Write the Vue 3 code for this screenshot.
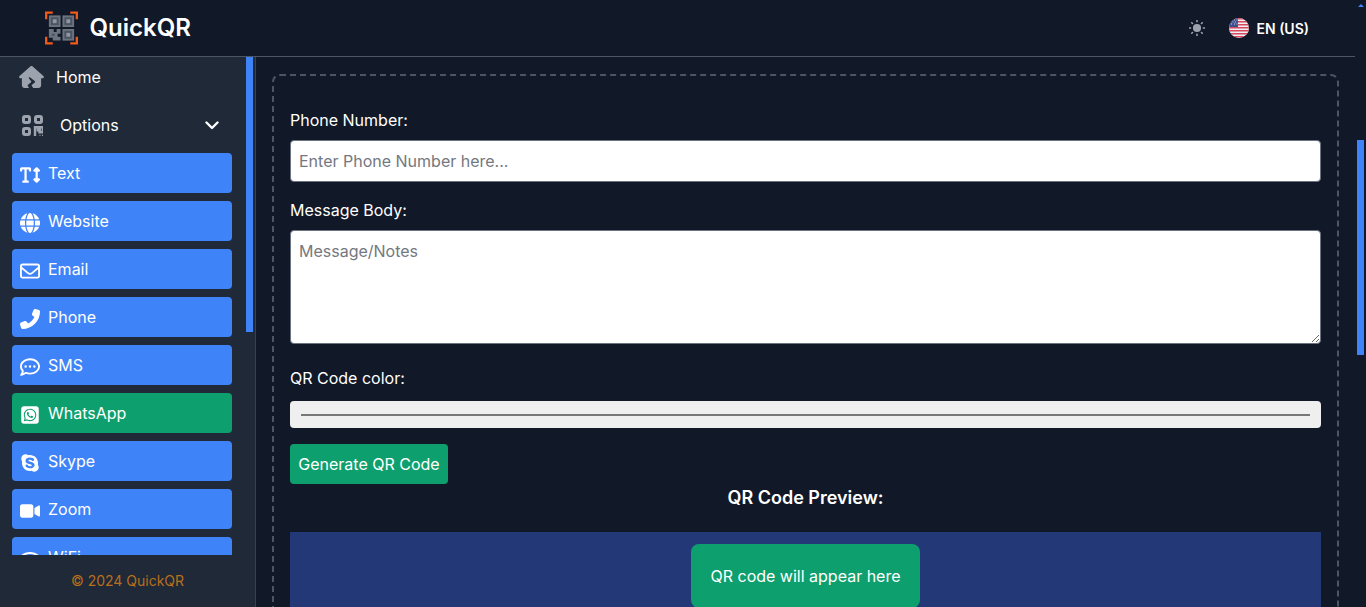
<script setup>
import { ref } from 'vue'

const phone = ref('')
const message = ref('')

// font awesome style glyphs, drawn inline because there is no icon package
const menu = [
  { name: 'Text', box: '0 0 576 512', d: 'M64 128V96h64l0 320H96c-17.7 0-32 14.3-32 32s14.3 32 32 32H224c17.7 0 32-14.3 32-32s-14.3-32-32-32H192l0-320h64v32c0 17.7 14.3 32 32 32s32-14.3 32-32V80c0-26.5-21.5-48-48-48H160 48C21.5 32 0 53.5 0 80v48c0 17.7 14.3 32 32 32s32-14.3 32-32zM502.6 41.4c-12.5-12.5-32.8-12.5-45.3 0l-64 64c-9.2 9.2-11.9 22.9-6.9 34.9s16.6 19.8 29.6 19.8h32V352H416c-12.9 0-24.6 7.8-29.6 19.8s-2.2 25.7 6.9 34.9l64 64c12.5 12.5 32.8 12.5 45.3 0l64-64c9.2-9.2 11.9-22.9 6.9-34.9s-16.6-19.8-29.6-19.8H512V160h32c12.9 0 24.6-7.8 29.6-19.8s2.2-25.7-6.9-34.9l-64-64z' },
  { name: 'Website', box: '0 0 512 512', d: 'M352 256c0 22.2-1.2 43.6-3.3 64H163.3c-2.2-20.4-3.3-41.8-3.3-64s1.2-43.6 3.3-64H348.7c2.2 20.4 3.3 41.8 3.3 64zm28.8-64H503.9c5.3 20.5 8.1 41.9 8.1 64s-2.8 43.5-8.1 64H380.8c2.1-20.6 3.2-42 3.2-64s-1.1-43.4-3.2-64zm112.6-32H376.7c-10-63.9-29.8-117.4-55.3-151.6c78.3 20.7 142 77.5 171.9 151.6zm-149.1 0H167.7c6.1-36.4 15.5-68.6 27-94.7c10.5-23.6 22.2-40.7 33.5-51.5C239.4 3.2 248.7 0 256 0s16.6 3.2 27.8 13.8c11.3 10.8 23 27.9 33.5 51.5c11.6 26 20.9 58.2 27 94.7zm-209 0H18.6C48.6 85.9 112.2 29.1 190.6 8.4C165.1 42.6 145.3 96.1 135.3 160zM8.1 192H131.2c-2.1 20.6-3.2 42-3.2 64s1.1 43.4 3.2 64H8.1C2.8 299.5 0 278.1 0 256s2.8-43.5 8.1-64zM194.7 446.6c-11.6-26-20.9-58.2-27-94.6H344.3c-6.1 36.4-15.5 68.6-27 94.6c-10.5 23.6-22.2 40.7-33.5 51.5C272.6 508.8 263.3 512 256 512s-16.6-3.2-27.8-13.8c-11.3-10.8-23-27.9-33.5-51.5zM135.3 352c10 63.9 29.8 117.4 55.3 151.6C112.2 482.9 48.6 426.1 18.6 352H135.3zm358.1 0c-30 74.1-93.6 130.9-171.9 151.6c25.5-34.2 45.2-87.7 55.3-151.6H493.4z' },
  { name: 'Email', box: '0 0 512 512', d: 'M64 112c-8.8 0-16 7.2-16 16v22.1L220.5 291.7c20.7 17 50.4 17 71.1 0L464 150.1V128c0-8.8-7.2-16-16-16H64zM48 212.2V384c0 8.8 7.2 16 16 16H448c8.8 0 16-7.2 16-16V212.2L322 328.8c-38.4 31.5-93.7 31.5-132 0L48 212.2zM0 128C0 92.7 28.7 64 64 64H448c35.3 0 64 28.7 64 64V384c0 35.3-28.7 64-64 64H64c-35.3 0-64-28.7-64-64V128z' },
  { name: 'Phone', box: '0 0 512 512', flip: true, d: 'M164.9 24.6c-7.7-18.6-28-28.5-47.4-23.2l-88 24C12.1 30.2 0 46 0 64C0 311.4 200.6 512 448 512c18 0 33.8-12.1 38.6-29.5l24-88c5.3-19.4-4.6-39.7-23.2-47.4l-96-40c-16.3-6.8-35.2-2.1-46.3 11.6L304.7 368C234.3 334.7 177.3 277.7 144 207.3L193.3 167c13.7-11.2 18.4-30 11.6-46.3l-40-96z' },
  { name: 'SMS', box: '0 0 512 512', d: 'M168.2 384.9c-15-5.4-31.7-3.1-44.6 6.4c-8.2 6-22.3 14.8-39.4 22.7c5.6-14.7 9.9-31.3 11.3-49.4c1-12.9-3.3-25.7-11.8-35.5C60.4 302.8 48 272 48 240c0-79.5 83.3-160 208-160s208 80.5 208 160s-83.3 160-208 160c-31.6 0-61.3-5.5-87.8-15.1zM26.3 423.8c-1.6 2.7-3.3 5.4-5.1 8.1l-.3 .5c-1.6 2.3-3.2 4.6-4.8 6.9c-3.5 4.7-7.3 9.3-11.3 13.6c-4.6 4.6-5.9 11.4-3.4 17.4c2.5 6 8.3 9.9 14.8 9.9c5.1 0 10.2-.3 15.3-.8l.7-.1c4.4-.5 8.8-1.1 13.2-1.9c.8-.1 1.6-.3 2.4-.5c17.8-3.5 34.9-9.5 50.1-16.1c22.9-10 42.4-21.9 54.3-30.6c31.8 11.5 67 17.9 104.1 17.9c141.4 0 256-93.1 256-208S397.4 32 256 32S0 125.1 0 240c0 45.1 17.7 86.8 47.7 120.9c-1.9 24.5-11.4 46.3-21.4 62.9zM144 272a32 32 0 1 0 0-64 32 32 0 1 0 0 64zm144-32a32 32 0 1 0 -64 0 32 32 0 1 0 64 0zm80 32a32 32 0 1 0 0-64 32 32 0 1 0 0 64z' },
  { name: 'WhatsApp', box: '0 0 448 512', green: true, d: 'M92.1 254.6c0 24.9 7 49.2 20.2 70.1l3.1 5-13.3 48.6L152 365.2l4.8 2.9c20.2 12 43.4 18.4 67.1 18.4h.1c72.6 0 133.3-59.1 133.3-131.8c0-35.2-15.2-68.3-40.1-93.2c-25-25-58-38.7-93.2-38.7c-72.7 0-131.8 59.1-131.9 131.8zM274.8 330c-12.6 1.9-22.4 .9-47.5-9.9c-36.8-15.9-61.8-51.5-66.9-58.7c-.4-.6-.7-.9-.8-1.1c-2-2.6-16.2-21.5-16.2-41c0-18.4 9-27.9 13.2-32.3c.3-.3 .5-.5 .7-.8c3.6-4 8-5 10.6-5c2.6 0 5.3 0 7.6 .1c.3 0 .5 0 .8 0c2.3 0 5.2 0 8.1 6.8c1.2 2.9 3 7.3 4.9 11.8c3.3 8 6.7 16.3 7.3 17.6c1 2 1.7 4.3 .3 6.9c-3.4 6.8-6.9 10.4-9.3 13c-3.1 3.2-4.5 4.7-2.3 8.6c15.3 26.3 30.6 35.4 53.9 47.1c4 2 6.3 1.7 8.6-1c2.3-2.6 9.9-11.6 12.5-15.5c2.6-4 5.3-3.3 8.9-2s23.1 10.9 27.1 12.9c.8 .4 1.5 .7 2.1 1c2.8 1.4 4.7 2.3 5.5 3.6c.9 1.9 .9 9.9-2.4 19.1c-3.3 9.3-19.1 17.7-26.7 18.8zM448 96c0-35.3-28.7-64-64-64H64C28.7 32 0 60.7 0 96V416c0 35.3 28.7 64 64 64H384c35.3 0 64-28.7 64-64V96zM148.1 393.9L64 416l22.5-82.2c-13.9-24-21.2-51.3-21.2-79.3C65.4 167.1 136.5 96 223.9 96c42.4 0 82.2 16.5 112.2 46.5c29.9 30 47.9 69.8 47.9 112.2c0 87.4-72.7 158.5-160.1 158.5c-26.6 0-52.7-6.7-75.8-19.3z' },
  { name: 'Skype', box: '0 0 448 512', d: 'M424.7 299.8c2.9-14 4.7-28.9 4.7-43.8 0-113.5-91.9-205.3-205.3-205.3-14.9 0-29.7 1.7-43.8 4.7C161.3 40.7 137.7 32 112 32 50.2 32 0 82.2 0 144c0 25.7 8.7 49.3 23.3 68.2-2.9 14-4.7 28.9-4.7 43.8 0 113.5 91.9 205.3 205.3 205.3 14.9 0 29.7-1.7 43.8-4.7 19 14.6 42.6 23.3 68.2 23.3 61.8 0 112-50.2 112-112 .1-25.6-8.6-49.2-23.2-68.1zm-194.6 91.5c-65.6 0-120.5-29.2-120.5-65 0-16 9-30.6 29.5-30.6 31.2 0 34.1 44.9 88.1 44.9 25.7 0 42.3-11.4 42.3-26.3 0-18.7-16-21.6-42-28-62.5-15.4-117.8-22-117.8-87.2 0-59.2 58.6-81.1 109.1-81.1 55.1 0 110.8 21.9 110.8 55.4 0 16.9-11.4 31.8-30.3 31.8-28.3 0-29.2-33.5-75-33.5-25.7 0-42 7-42 22.5 0 19.8 20.8 21.8 69.1 33 41.4 9.3 90.7 26.8 90.7 77.6 0 59.1-57.1 86.5-112 86.5z' },
  { name: 'Zoom', box: '0 0 576 512', d: 'M0 128C0 92.7 28.7 64 64 64H320c35.3 0 64 28.7 64 64V384c0 35.3-28.7 64-64 64H64c-35.3 0-64-28.7-64-64V128zM559.1 99.8c10.4 5.6 16.9 16.4 16.9 28.2V384c0 11.8-6.5 22.6-16.9 28.2s-23 5-32.9-1.6l-96-64L416 337.1V320 192 174.9l14.2-9.5 96-64c9.8-6.5 22.4-7.2 32.9-1.6z' },
  { name: 'WiFi', box: '0 0 640 512', d: 'M54.2 202.9C123.2 136.6 216.8 96 320 96s196.8 40.6 265.8 106.9c12.8 12.2 33 11.8 45.2-.9s11.8-33-.9-45.2C549.7 79.5 440.4 32 320 32S90.3 79.5 9.8 156.7C-2.9 169-3.3 189.2 8.9 202s32.5 13.2 45.2 .9zM320 256c56.8 0 108.6 21.1 148.2 56c13.3 11.7 33.5 10.4 45.2-2.8s10.4-33.5-2.8-45.2C459.8 219.2 393 192 320 192s-139.8 27.2-190.5 72c-13.3 11.7-14.5 31.9-2.8 45.2s31.9 14.5 45.2 2.8c39.5-34.9 91.3-56 148.2-56zm64 160a64 64 0 1 0 -128 0 64 64 0 1 0 128 0z' }
]

const stripes = [0, 1, 2, 3, 4, 5, 6]
</script>

<template>
  <div class="page">
    <div class="shell">
      <header class="topbar">
        <div class="brand">
          <svg class="logo" viewBox="0 0 34 34">
            <g fill="none" stroke="#ee5a1a" stroke-width="2.400">
              <path d="M1.200 8V1.200H8M26 1.200h6.800V8M32.800 26v6.800H26M8 32.800H1.200V26" />
            </g>
            <g fill="#6b7280">
              <rect x="4" y="4" width="12" height="12" />
              <rect x="18" y="4" width="12" height="12" />
              <rect x="18" y="18" width="12" height="12" />
              <path d="M4 18h5v3h3v-3h4v5h-3v3h3v4H8v-3H4z" />
            </g>
            <g fill="#111827" opacity=".35">
              <rect x="6" y="6" width="8" height="8" />
              <rect x="20" y="6" width="8" height="8" />
              <rect x="20" y="20" width="8" height="8" />
              <rect x="7" y="23" width="3" height="2" />
            </g>
            <g fill="#9096a0">
              <rect x="8" y="8" width="4" height="4" />
              <rect x="22" y="8" width="4" height="4" />
              <rect x="22" y="22" width="4" height="4" />
            </g>
          </svg>
          <span class="brand-name">QuickQR</span>
        </div>
        <div class="top-actions">
          <svg class="sun" viewBox="1 1 18 18" fill="#9ca3af">
            <circle cx="10" cy="10" r="4.600" />
            <g stroke="#9ca3af" stroke-width="1.800" stroke-linecap="round">
              <path d="M10 1.600v1.200M10 17.200v1.200M1.600 10h1.200M17.200 10h1.200M4.100 4.100l.8.8M15.100 15.100l.8.8M4.100 15.900l.8-.8M15.100 4.900l.8-.8" />
            </g>
          </svg>
          <div class="lang">
            <svg class="flag" viewBox="0 0 20 20">
              <defs>
                <clipPath id="flag-clip"><circle cx="10" cy="10" r="10" /></clipPath>
              </defs>
              <g clip-path="url(#flag-clip)">
                <rect width="20" height="20" fill="#eef0f3" />
                <rect v-for="s in stripes" :key="s" x="0" :y="s * 3" width="20" height="1.500" fill="#d8475b" />
                <rect width="9" height="9" fill="#3c4f8f" />
                <path d="M2 2h1M5 2h1M7.500 2h1M3.500 4h1M6 4h1M2 6h1M5 6h1M7.500 6h1" stroke="#eef0f3" stroke-width=".8" />
              </g>
            </svg>
            <span class="lang-text">EN (US)</span>
          </div>
        </div>
      </header>

      <div class="body">
        <aside class="sidebar">
          <div class="side-scroll">
            <nav class="nav">
              <a class="home">
                <svg class="home-icon" viewBox="0 0 576 512" fill="#9ca3af"><path d="M543.800 287.600c17 0 32-14 32-32.100c1-9-3-17-11-24L309.500 7c-6-5-14-7-21-7s-15 1-22 8L10 231.500c-7 7-10 15-10 24c0 18 14 32.100 32 32.100h32V448c0 35.300 28.700 64 64 64H230.400l-31.300-52.200c-4.100-6.800-2.600-15.500 3.500-20.500L288 368l-60.200-82.800c-10.900-15 8.200-33.500 22.800-22l117.900 92.600c8 6.300 8.200 18.400 .4 24.900L288 448l38.400 64H448.500c35.500 0 64.200-28.800 64-64.300l-.7-160.200h32z" /></svg>
                <span>Home</span>
              </a>
              <button class="options">
                <svg class="options-icon" viewBox="0 0 21 21" fill="none" stroke="#9ca3af" stroke-width="3">
                  <rect x="1.500" y="1.500" width="6" height="6" rx="1.500" />
                  <rect x="13.500" y="1.500" width="6" height="6" rx="1.500" />
                  <rect x="1.500" y="13.500" width="6" height="6" rx="1.500" />
                  <path d="M13 21v-8.800h2.800v3h2v-3h3v5h-4.500" stroke-width="2.400" />
                  <path d="M17.500 20.500h1M20 20.500h1" stroke-width="1.500" />
                </svg>
                <span class="options-label">Options</span>
                <svg class="chevron" viewBox="0 0 14 9" fill="none" stroke="#fff" stroke-width="2.400" stroke-linecap="round" stroke-linejoin="round"><path d="M1.500 1.500 7 7l5.500-5.500" /></svg>
              </button>
              <ul class="menu">
                <li v-for="item in menu" :key="item.name" class="menu-item" :class="{ green: item.green }">
                  <span class="menu-icon">
                    <svg :viewBox="item.box" :class="{ flip: item.flip }" fill="#fff"><path :d="item.d" /></svg>
                  </span>
                  <span>{{ item.name }}</span>
                </li>
              </ul>
            </nav>
            <div class="side-track"><div class="side-thumb"></div></div>
          </div>
          <footer class="side-footer">© 2024 QuickQR</footer>
        </aside>

        <main class="main">
          <section class="panel">
            <label class="label first" for="phone">Phone Number:</label>
            <input id="phone" v-model="phone" class="field" type="text" placeholder="Enter Phone Number here...">
            <label class="label" for="message">Message Body:</label>
            <textarea id="message" v-model="message" class="field area" placeholder="Message/Notes"></textarea>
            <label class="label color-label" for="color">QR Code color:</label>
            <input id="color" class="color" type="color" value="#777777">
            <button class="generate">Generate QR Code</button>
            <h3 class="preview-title">QR Code Preview:</h3>
            <div class="preview">
              <div class="placeholder">QR code will appear here</div>
            </div>
          </section>
        </main>
      </div>
    </div>

    <div class="page-track">
      <span class="arrow"></span>
      <div class="page-thumb"></div>
    </div>
  </div>
</template>

<style>
html, body {
  margin: 0;
  height: 100%;
  overflow: hidden;
  background: #111827;
}
</style>

<style scoped>
.page {
  display: flex;
  height: 607px;
  background: #111827;
  color: #fff;
  font-family: Inter, "Liberation Sans", sans-serif;
  font-size: 16px;
  overflow: hidden;
}

.shell {
  flex: 1;
  min-width: 0;
  display: flex;
  flex-direction: column;
}

.topbar {
  height: 56px;
  flex: none;
  display: flex;
  align-items: center;
  justify-content: space-between;
  border-bottom: 1px solid #4b5563;
  padding: 0 46px 0 45px;
}

.brand {
  display: flex;
  align-items: center;
  gap: 12px;
}

.logo {
  width: 33px;
  height: 34px;
}

.brand-name {
  font-size: 24px;
  font-weight: 600;
  line-height: 32px;
  margin-left: -0.5px;
}

.top-actions {
  display: flex;
  align-items: center;
  gap: 24px;
}

.sun {
  width: 16px;
  height: 16px;
}

.lang {
  display: flex;
  align-items: center;
  gap: 8px;
}

.flag {
  width: 20px;
  height: 20px;
}

.lang-text {
  font-size: 14px;
  font-weight: 600;
}

.body {
  flex: 1;
  min-height: 0;
  display: flex;
}

.sidebar {
  width: 255px;
  flex: none;
  display: flex;
  flex-direction: column;
  background: #1f2937;
  border-right: 1px solid #374151;
}

.side-scroll {
  flex: 1;
  min-height: 0;
  display: flex;
  overflow: hidden;
}

.nav {
  flex: 1;
  min-width: 0;
  padding: 0 14px 0 12px;
}

.home {
  height: 40px;
  display: flex;
  align-items: center;
  gap: 12px;
  padding-left: 7px;
}

.home-icon {
  width: 25px;
  height: 22px;
}

.options {
  width: 100%;
  height: 40px;
  margin-top: 8px;
  display: flex;
  align-items: center;
  padding: 0 13px 0 10px;
  border: 0;
  background: none;
  color: #fff;
  font: inherit;
}

.options-icon {
  width: 21px;
  height: 21px;
}

.options-label {
  flex: 1;
  text-align: left;
  margin-left: 17px;
}

.chevron {
  width: 14px;
  height: 9px;
}

.menu {
  list-style: none;
  margin: 8px 0 0;
  padding: 0;
  display: flex;
  flex-direction: column;
  gap: 8px;
}

.menu-item {
  height: 40px;
  display: flex;
  align-items: center;
  gap: 8px;
  padding-left: 8px;
  background: #3f83f8;
  border-radius: 4px;
}

.menu-item.green {
  background: #0e9f6e;
}

.menu-icon {
  width: 20px;
  height: 20px;
  flex: none;
  display: flex;
  align-items: center;
  justify-content: center;
  margin-top: 4px;
}

.menu-icon svg {
  width: 20px;
  height: 20px;
}

.menu-icon .flip {
  transform: scaleX(-1);
}

.side-track {
  width: 9px;
  flex: none;
}

.side-thumb {
  width: 7px;
  height: 275px;
  background: #3f83f8;
}

.side-footer {
  height: 52px;
  flex: none;
  box-sizing: border-box;
  display: flex;
  align-items: center;
  justify-content: center;
  padding-bottom: 2px;
  font-size: 14px;
  color: #b96f1d;
}

.main {
  flex: 1;
  min-width: 0;
  padding: 17px 16px 0 16px;
}

.panel {
  display: flex;
  flex-direction: column;
  border: 2px dashed #4b5563;
  border-bottom: 0;
  border-radius: 8px 8px 0 0;
  padding: 0 16px;
  height: 560px;
  box-sizing: border-box;
}

.label {
  font-size: 16px;
  line-height: 24px;
  margin: 16px 0 8px;
}

.label.first {
  margin-top: 32px;
  margin-bottom: 8px;
}

.color-label {
  margin-top: 22px;
  margin-bottom: 11px;
}

.field {
  box-sizing: border-box;
  width: 100%;
  height: 42px;
  flex: none;
  padding: 8px;
  border: 1px solid #6b7280;
  border-radius: 4px;
  background: #fff;
  font: inherit;
  color: #111827;
  outline: none;
}

.field::placeholder {
  color: #74787f;
  opacity: 1;
}

.area {
  height: 114px;
  padding: 10px 8px;
  resize: vertical;
}

.color {
  box-sizing: border-box;
  width: 100%;
  height: 27px;
  flex: none;
  margin: 0;
  padding: 13px 11px 12px;
  border: 0;
  border-radius: 4px;
  background: #efefef;
  appearance: none;
}

.color::-webkit-color-swatch-wrapper {
  padding: 0;
}

.color::-webkit-color-swatch {
  border: 0;
}

.generate {
  align-self: flex-start;
  min-width: 158px;
  height: 40px;
  margin-top: 16px;
  padding: 0 8px;
  border: 0;
  border-radius: 4px;
  background: #0e9f6e;
  color: #fff;
  font: inherit;
}

.preview-title {
  margin: 2px 0 0;
  text-align: center;
  font-size: 18px;
  font-weight: 600;
  line-height: 24px;
}

.preview {
  flex: 1;
  margin-top: 22px;
  display: flex;
  justify-content: center;
  padding-top: 12px;
  background: #233876;
  overflow: hidden;
}

.placeholder {
  height: 64px;
  padding: 0 19.500px;
  display: flex;
  align-items: center;
  border-radius: 8px;
  background: #0e9f6e;
}

.page-track {
  width: 11px;
  flex: none;
  display: flex;
  flex-direction: column;
  align-items: flex-end;
}

.arrow {
  margin: 4px 2px 0 0;
  width: 0;
  height: 0;
  border-left: 3px solid transparent;
  border-right: 3px solid transparent;
  border-bottom: 3px solid #3f83f8;
}

.page-thumb {
  width: 7px;
  height: 215px;
  margin-top: 133px;
  margin-right: 2px;
  background: #3f83f8;
}
</style>
